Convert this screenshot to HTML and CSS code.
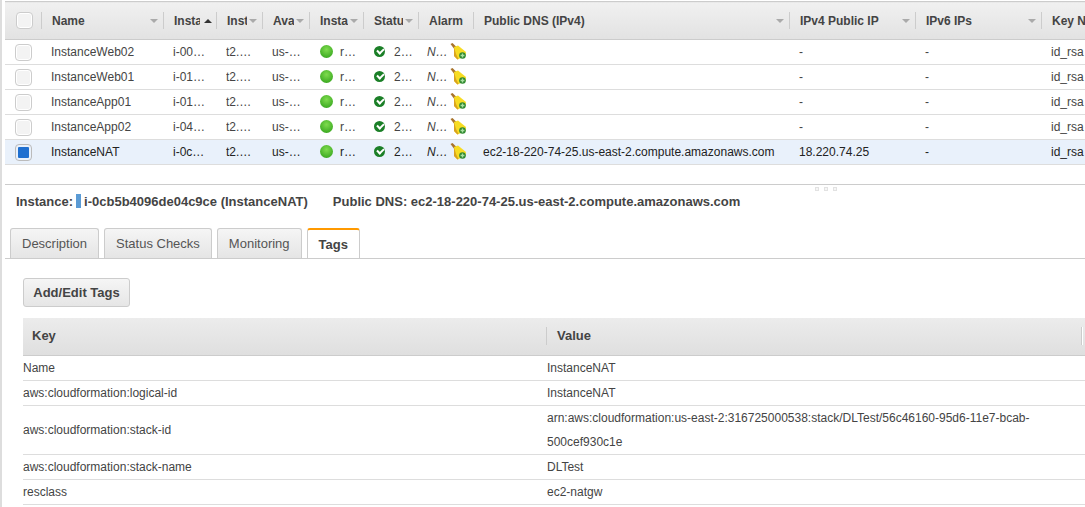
FILE: index.html
```html
<!DOCTYPE html>
<html lang="en">
<head>
    <meta charset="UTF-8">
    <title>EC2 Instances</title>
    <link rel="stylesheet" href="styles.css">
</head>
<body>
    <svg class="defs" width="0" height="0">
        <symbol id="broom" viewBox="0 0 18 18">
            <path d="M1.5 2 L3.5 1 L8 5.5 L6 8 Z" fill="#a8742c"/>
            <path d="M5 5 L9 3.5 L17 10 L16.5 14 L8.5 17.5 L5 14 Z" fill="#f7dc22"/>
            <path d="M5 5 L5 14 L8.5 17.5 L9.5 17 L7 12 Z" fill="#d9a21f"/>
            <circle cx="13.5" cy="13.5" r="3.3" fill="#2f8a30"/>
            <path d="M13.5 11.6 V15.4 M11.6 13.5 H15.4" stroke="#a9e0a0" stroke-width="1.3"/>
        </symbol>
    </svg>

    <div class="grid-pane">
        <table class="grid">
            <colgroup>
                <col class="c-check"><col class="c-name"><col class="c-id"><col class="c-type"><col class="c-zone">
                <col class="c-state"><col class="c-status"><col class="c-alarm"><col class="c-dns"><col class="c-ip">
                <col class="c-ip"><col class="c-key">
            </colgroup>
            <thead>
                <tr>
                    <th><div class="head head-check"><span class="check"></span></div></th>
                    <th><div class="head"><span class="label">Name</span><i class="caret"></i></div></th>
                    <th><div class="head"><span class="label">Instance ID</span><i class="caret sorted"></i></div></th>
                    <th><div class="head"><span class="label">Instance Type</span><i class="caret"></i></div></th>
                    <th><div class="head"><span class="label">Availability Zone</span><i class="caret"></i></div></th>
                    <th><div class="head"><span class="label">Instance State</span><i class="caret"></i></div></th>
                    <th><div class="head"><span class="label">Status Checks</span><i class="caret"></i></div></th>
                    <th><div class="head"><span class="label">Alarm</span></div></th>
                    <th><div class="head"><span class="label">Public DNS (IPv4)</span><i class="caret"></i></div></th>
                    <th><div class="head"><span class="label">IPv4 Public IP</span><i class="caret"></i></div></th>
                    <th><div class="head"><span class="label">IPv6 IPs</span><i class="caret"></i></div></th>
                    <th><div class="head no-sep"><span class="label">Key Name</span></div></th>
                </tr>
            </thead>
            <tbody>
                <tr>
                    <td><span class="check"></span></td>
                    <td>InstanceWeb02</td>
                    <td><span class="clip w-id">i-00a1f3c9d27b4e681</span></td>
                    <td><span class="clip w-type">t2.micro</span></td>
                    <td><span class="clip w-zone">us-east-2a</span></td>
                    <td><span class="cell-icon"><i class="dot"></i><span class="clip w-state">running</span></span></td>
                    <td><span class="cell-icon"><i class="ok"></i><span class="clip w-status">2/2 checks</span></span></td>
                    <td><span class="cell-icon alarm"><em class="clip w-alarm">None</em><svg class="broom"><use href="#broom"/></svg></span></td>
                    <td></td>
                    <td>-</td>
                    <td>-</td>
                    <td>id_rsa</td>
                </tr>
                <tr>
                    <td><span class="check"></span></td>
                    <td>InstanceWeb01</td>
                    <td><span class="clip w-id">i-01b7e2d40c93fa512</span></td>
                    <td><span class="clip w-type">t2.micro</span></td>
                    <td><span class="clip w-zone">us-east-2a</span></td>
                    <td><span class="cell-icon"><i class="dot"></i><span class="clip w-state">running</span></span></td>
                    <td><span class="cell-icon"><i class="ok"></i><span class="clip w-status">2/2 checks</span></span></td>
                    <td><span class="cell-icon alarm"><em class="clip w-alarm">None</em><svg class="broom"><use href="#broom"/></svg></span></td>
                    <td></td>
                    <td>-</td>
                    <td>-</td>
                    <td>id_rsa</td>
                </tr>
                <tr>
                    <td><span class="check"></span></td>
                    <td>InstanceApp01</td>
                    <td><span class="clip w-id">i-01c95ad71e08b3f46</span></td>
                    <td><span class="clip w-type">t2.micro</span></td>
                    <td><span class="clip w-zone">us-east-2a</span></td>
                    <td><span class="cell-icon"><i class="dot"></i><span class="clip w-state">running</span></span></td>
                    <td><span class="cell-icon"><i class="ok"></i><span class="clip w-status">2/2 checks</span></span></td>
                    <td><span class="cell-icon alarm"><em class="clip w-alarm">None</em><svg class="broom"><use href="#broom"/></svg></span></td>
                    <td></td>
                    <td>-</td>
                    <td>-</td>
                    <td>id_rsa</td>
                </tr>
                <tr>
                    <td><span class="check"></span></td>
                    <td>InstanceApp02</td>
                    <td><span class="clip w-id">i-04d3b86f2a17ce905</span></td>
                    <td><span class="clip w-type">t2.micro</span></td>
                    <td><span class="clip w-zone">us-east-2a</span></td>
                    <td><span class="cell-icon"><i class="dot"></i><span class="clip w-state">running</span></span></td>
                    <td><span class="cell-icon"><i class="ok"></i><span class="clip w-status">2/2 checks</span></span></td>
                    <td><span class="cell-icon alarm"><em class="clip w-alarm">None</em><svg class="broom"><use href="#broom"/></svg></span></td>
                    <td></td>
                    <td>-</td>
                    <td>-</td>
                    <td>id_rsa</td>
                </tr>
                <tr class="selected">
                    <td><span class="check checked"></span></td>
                    <td>InstanceNAT</td>
                    <td><span class="clip w-id">i-0cb5b4096de04c9ce</span></td>
                    <td><span class="clip w-type">t2.micro</span></td>
                    <td><span class="clip w-zone">us-east-2a</span></td>
                    <td><span class="cell-icon"><i class="dot"></i><span class="clip w-state">running</span></span></td>
                    <td><span class="cell-icon"><i class="ok"></i><span class="clip w-status">2/2 checks</span></span></td>
                    <td><span class="cell-icon alarm"><em class="clip w-alarm">None</em><svg class="broom"><use href="#broom"/></svg></span></td>
                    <td>ec2-18-220-74-25.us-east-2.compute.amazonaws.com</td>
                    <td>18.220.74.25</td>
                    <td>-</td>
                    <td>id_rsa</td>
                </tr>
            </tbody>
        </table>
    </div>

    <div class="detail-pane">
        <div class="grip"><i></i><i></i><i></i></div>
        <div class="summary">
            <span>Instance:</span>
            <i class="swatch"></i>
            <span class="summary-id">i-0cb5b4096de04c9ce (InstanceNAT)</span>
            <span class="summary-dns">Public DNS: ec2-18-220-74-25.us-east-2.compute.amazonaws.com</span>
        </div>
        <div class="tabs">
            <a class="tab">Description</a>
            <a class="tab">Status Checks</a>
            <a class="tab">Monitoring</a>
            <a class="tab active">Tags</a>
        </div>
        <div class="tags">
            <button class="btn" type="button">Add/Edit Tags</button>
            <table class="tag-table">
                <thead>
                    <tr>
                        <th><div class="tag-head">Key</div></th>
                        <th><div class="tag-head tag-head-last">Value</div></th>
                    </tr>
                </thead>
                <tbody>
                    <tr><td>Name</td><td>InstanceNAT</td></tr>
                    <tr><td>aws:cloudformation:logical-id</td><td>InstanceNAT</td></tr>
                    <tr><td>aws:cloudformation:stack-id</td><td>arn:aws:cloudformation:us-east-2:316725000538:stack/DLTest/56c46160-95d6-11e7-bcab-500cef930c1e</td></tr>
                    <tr><td>aws:cloudformation:stack-name</td><td>DLTest</td></tr>
                    <tr><td>resclass</td><td>ec2-natgw</td></tr>
                </tbody>
            </table>
        </div>
    </div>
</body>
</html>
```

FILE: styles.css
```css
* {
    margin: 0;
    padding: 0;
    box-sizing: border-box;
}
html, body {
    height: 507px;
    overflow: hidden;
}
body {
    width: 1085px;
    font-family: "Liberation Sans", Arial, sans-serif;
    font-size: 12px;
    color: #444;
    background: #fff;
    border-left: 2px solid #ddd;
}
.defs {
    display: block;
    height: 0;
}

/* instance grid */
.grid-pane {
    height: 185px;
    margin-left: 3px;
    padding-top: 1px;
    border-bottom: 1px solid #ccc;
    overflow: hidden;
}
.grid {
    width: 1100px;
    table-layout: fixed;
    border-collapse: collapse;
}
.c-check { width: 37px; }
.c-name { width: 122px; }
.c-id { width: 53px; }
.c-type { width: 46px; }
.c-zone { width: 47px; }
.c-state { width: 54px; }
.c-status { width: 55px; }
.c-alarm { width: 55px; }
.c-dns { width: 316px; }
.c-ip { width: 126px; }
.c-key { width: 63px; }
.grid th {
    height: 38px;
    text-align: left;
    background: linear-gradient(#f0f0f0, #e2e2e2);
    border-top: 1px solid #ccc;
    border-bottom: 1px solid #ccc;
}
.head {
    display: flex;
    align-items: center;
    height: 17px;
    padding: 0 5px 0 10px;
    border-right: 1px solid #ccc;
    box-shadow: 1px 0 0 #fff;
}
.head-check {
    padding: 0 0 0 10px;
}
.no-sep {
    border-right: 0;
    box-shadow: none;
}
.label {
    flex: 1;
    overflow: hidden;
    white-space: nowrap;
    min-width: 0;
    color: #444;
}
.caret {
    flex: none;
    margin-left: 2px;
    border-left: 4px solid transparent;
    border-right: 4px solid transparent;
    border-top: 4px solid #aaa;
}
.caret.sorted {
    margin-left: 4px;
    margin-right: -1px;
    border-top: 0;
    border-bottom: 4px solid #333;
}
.grid td {
    height: 25px;
    padding: 0 0 0 9px;
    white-space: nowrap;
    border-bottom: 1px solid #ddd;
    overflow: hidden;
}
.selected td {
    background: #e9f1fb;
    color: #222;
}
.check {
    display: block;
    width: 17px;
    height: 17px;
    margin-left: 1px;
    border: 1px solid #ccc;
    border-radius: 4px;
    background: #f3f3f3;
    box-shadow: inset 0 0 0 1px #fff;
}
.checked {
    padding: 2px;
    background: #1e6fd0;
    background-clip: content-box;
    border-color: #bbb;
    box-shadow: none;
}
.clip {
    display: block;
    overflow: hidden;
    white-space: nowrap;
    text-overflow: ellipsis;
    font-style: normal;
}
.w-id { width: 34px; }
.w-type { width: 26px; }
.w-zone { width: 30px; }
.w-state { width: 17px; }
.w-status { width: 18px; }
.w-alarm { width: 20px; font-style: italic; }
.cell-icon {
    display: flex;
    align-items: center;
}
.dot {
    flex: none;
    width: 13px;
    height: 13px;
    margin: 0 7px 2px 1px;
    border-radius: 50%;
    background: radial-gradient(circle at 50% 35%, #7fdc4e, #36a51e 85%);
}
.ok {
    flex: none;
    width: 11px;
    height: 11px;
    margin: 0 9px 2px 1px;
    border-radius: 50%;
    background: #1b7f27;
    position: relative;
}
.ok::after {
    content: "";
    position: absolute;
    left: 3px;
    top: 2px;
    width: 5px;
    height: 3px;
    border-left: 2px solid #fff;
    border-bottom: 2px solid #fff;
    transform: rotate(-45deg);
}
.alarm {
    margin-left: -1px;
}
.broom {
    flex: none;
    width: 18px;
    height: 18px;
    margin: 0 0 2px 2px;
}

/* detail pane */
.detail-pane {
    margin-left: 3px;
}
.grip {
    display: flex;
    gap: 5px;
    height: 5px;
    margin-top: 2px;
    padding-left: 810px;
}
.grip i {
    width: 4px;
    height: 4px;
    border: 1px solid #e2e2e2;
    background: #f6f6f6;
}
.summary {
    display: flex;
    align-items: center;
    height: 18px;
    padding-left: 11px;
    font-size: 13px;
    font-weight: bold;
}
.swatch {
    width: 5px;
    height: 14px;
    margin: 0 3px 0 3px;
    background: #5b9bd5;
}
.summary-dns {
    margin-left: 25px;
}
.tabs {
    display: flex;
    gap: 5px;
    height: 31px;
    margin-top: 18px;
    padding-left: 5px;
    border-bottom: 1px solid #ccc;
}
.tab {
    padding: 7px 11px 0;
    font-size: 13px;
    color: #555;
    border: 1px solid #ccc;
    border-bottom: 0;
    border-radius: 3px 3px 0 0;
    background: linear-gradient(#f5f5f5, #e5e5e5);
}
.tab.active {
    font-weight: bold;
    color: #444;
    background: #fff;
    border-top: 2px solid #f90;
    height: 30px;
}
.tags {
    padding: 19px 0 0 18px;
}
.btn {
    display: block;
    width: 107px;
    height: 29px;
    font: bold 13px "Liberation Sans", Arial, sans-serif;
    color: #444;
    border: 1px solid #ccc;
    border-radius: 3px;
    background: linear-gradient(#f5f5f5, #e6e6e6);
}
.tag-table {
    width: 1062px;
    margin-top: 11px;
    table-layout: fixed;
    border-collapse: collapse;
}
.tag-table th {
    height: 37px;
    padding-bottom: 1px;
    text-align: left;
    font-size: 13px;
    background: linear-gradient(#ececec, #dfdfdf);
    border-bottom: 1px solid #ccc;
}
.tag-table th:first-child {
    width: 524px;
}
.tag-head {
    display: flex;
    align-items: center;
    height: 18px;
    padding-left: 9px;
    border-right: 1px solid #ccc;
    box-shadow: 1px 0 0 #fff;
}
.tag-head-last {
    margin-right: 3px;
    padding-left: 10px;
}
.tag-table td {
    padding: 0;
    line-height: 24px;
    border-bottom: 1px solid #ddd;
}
```
